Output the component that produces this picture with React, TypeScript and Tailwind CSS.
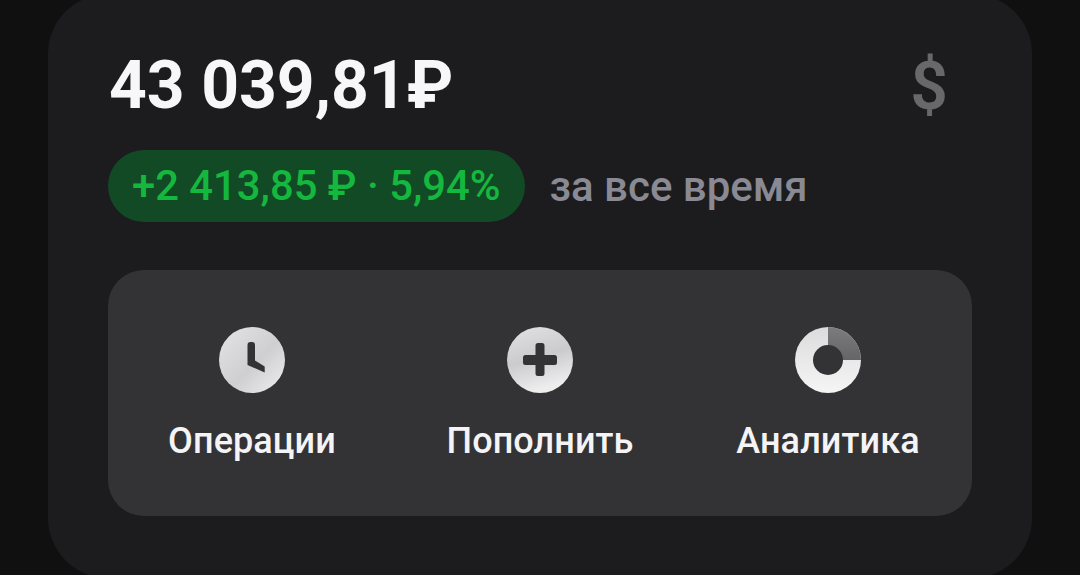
const roboto = { fontFamily: "Roboto, 'Noto Sans', sans-serif" };

function ClockIcon() {
  return (
    <svg width="66" height="66" viewBox="0 0 66 66">
      <defs>
        <linearGradient id="clockFill" x1="0" y1="0" x2="1" y2="1">
          <stop offset="0" stopColor="#e4e4e5" />
          <stop offset="0.55" stopColor="#cfcfd1" />
          <stop offset="1" stopColor="#efeff0" />
        </linearGradient>
      </defs>
      <circle cx="33" cy="33" r="33" fill="url(#clockFill)" />
      <path d="M28.500 18a3 3 0 0 1 3-3h1.500a3 3 0 0 1 3 3v15.500l9.700 6v6L28.500 38z" fill="#333335" />
    </svg>
  );
}

function PlusIcon() {
  return (
    <svg width="66" height="66" viewBox="0 0 66 66">
      <defs>
        <linearGradient id="plusFill" x1="0" y1="0" x2="0.3" y2="1">
          <stop offset="0" stopColor="#e2e2e3" />
          <stop offset="0.55" stopColor="#cbcbcd" />
          <stop offset="1" stopColor="#ededee" />
        </linearGradient>
      </defs>
      <circle cx="33" cy="33" r="33" fill="url(#plusFill)" />
      <path d="M31 16h4a2.500 2.500 0 0 1 2.500 2.500V28h10a2.500 2.500 0 0 1 2.500 2.500v5a2.500 2.500 0 0 1-2.500 2.500h-10v8.500a2.500 2.500 0 0 1-2.500 2.500h-4a2.500 2.500 0 0 1-2.500-2.500V38h-10a2.500 2.500 0 0 1-2.500-2.500v-5a2.500 2.500 0 0 1 2.500-2.500h10v-9.500A2.500 2.500 0 0 1 31 16z" fill="#333335" />
    </svg>
  );
}

function DonutIcon() {
  return (
    <svg width="66" height="66" viewBox="0 0 66 66">
      <defs>
        <linearGradient id="donutLight" x1="0" y1="0" x2="0" y2="1">
          <stop offset="0" stopColor="#dcdcdd" />
          <stop offset="1" stopColor="#f5f5f6" />
        </linearGradient>
        <linearGradient id="donutDark" x1="0" y1="0" x2="0" y2="1">
          <stop offset="0" stopColor="#7c7c7e" />
          <stop offset="1" stopColor="#656567" />
        </linearGradient>
      </defs>
      <circle cx="33" cy="33" r="33" fill="url(#donutLight)" />
      <path d="M33 0a33 33 0 0 1 33 33H33z" fill="url(#donutDark)" />
      <circle cx="33" cy="33" r="15" fill="#333335" />
    </svg>
  );
}

function Action({ icon, label }: { icon: React.ReactNode; label: string }) {
  return (
    <div className="flex flex-col items-center gap-[28px]">
      {icon}
      <span className="text-[36px] leading-[40px] tracking-[0.1px] font-medium text-[#f4f4f6] whitespace-nowrap">
        {label}
      </span>
    </div>
  );
}

export default function App() {
  return (
    <div
      className="w-[1080px] h-[575px] overflow-hidden bg-[#101010] px-[48px]"
      style={roboto}
    >
      <div className="mt-[-6px] h-[584px] rounded-[60px] bg-[#1c1c1e] px-[60px] pt-[53px]">
        <div className="flex items-start justify-between">
          <div className="ml-[1px] text-[66px] leading-[78px] font-bold text-[#f7f7f9] whitespace-nowrap">
            43 039,81₽
          </div>
          <div className="mr-[24px] mt-[1px] text-[66px] leading-[78px] font-semibold text-[#68686a]">
            $
          </div>
        </div>
        <div className="mt-[24px] flex items-center gap-[25px]">
          <div className="flex h-[72px] items-center rounded-full bg-[#134a26] px-[24px] text-[41.8px] font-medium text-[#14b83f] whitespace-nowrap">
            +2 413,85 ₽ · 5,94%
          </div>
          <div className="text-[42px] font-medium text-[#8a8a94] whitespace-nowrap">
            за все время
          </div>
        </div>
        <div className="mt-[48px] grid h-[246px] grid-cols-3 items-start rounded-[36px] bg-[#333335] pt-[57px]">
          <Action icon={<ClockIcon />} label="Операции" />
          <Action icon={<PlusIcon />} label="Пополнить" />
          <Action icon={<DonutIcon />} label="Аналитика" />
        </div>
      </div>
    </div>
  );
}
